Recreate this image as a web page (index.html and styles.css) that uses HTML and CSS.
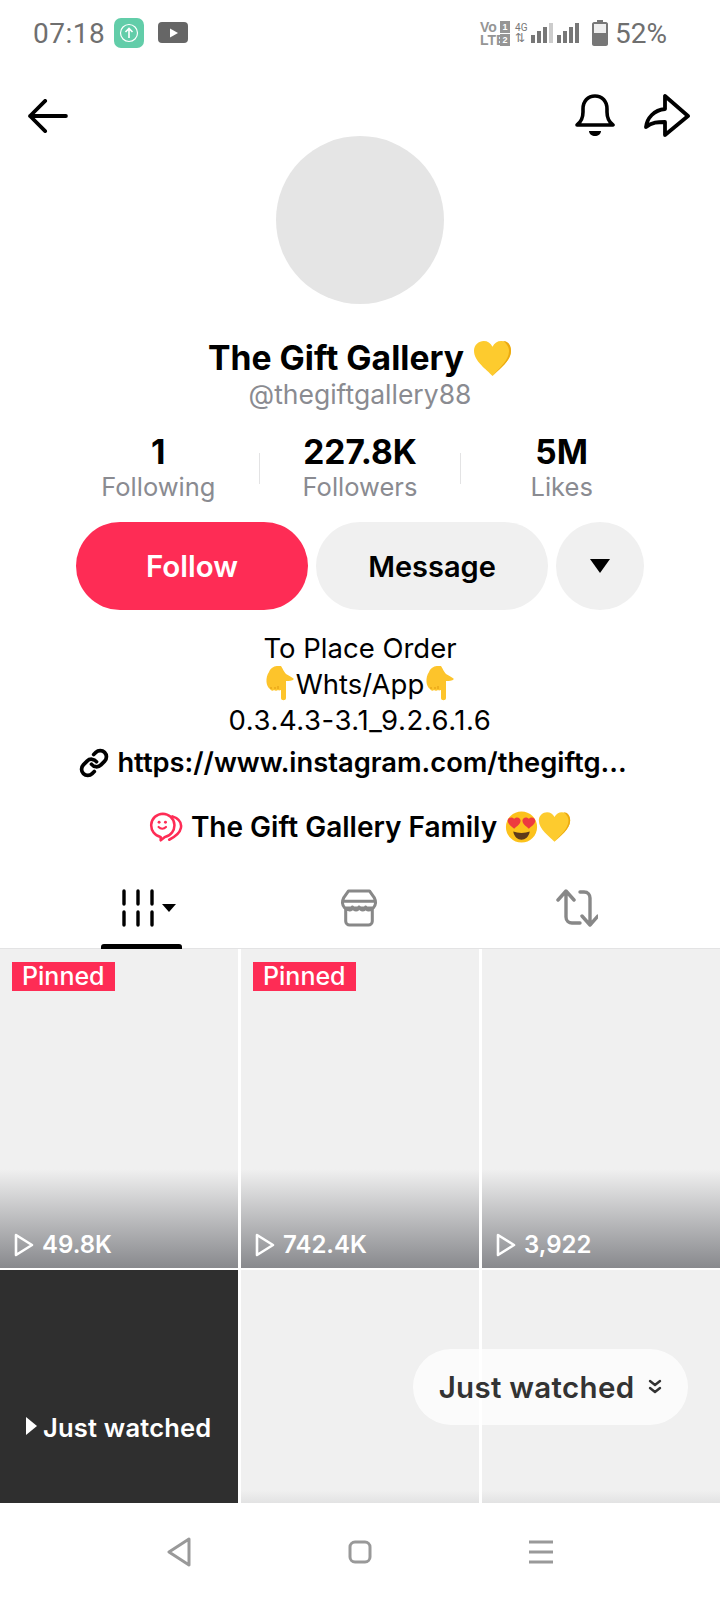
FILE: index.html
```html
<!DOCTYPE html>
<html lang="en">
<head>
  <meta charset="UTF-8">
  <title>The Gift Gallery</title>
  <link rel="stylesheet" href="styles.css">
</head>
<body>

  <svg class="defs" width="0" height="0">
    <symbol id="heart" viewBox="0 0 40 38">
      <path d="M20 37C14 30 1 22 1 11 1 5 6 1 11 1c4 0 7 2 9 6 2-4 5-6 9-6 5 0 10 4 10 10 0 11-13 19-19 26z" fill="#fdcb2e"/>
      <path d="M31 1c5 0 8 4 8 10 0 11-13 19-19 26 5-7 17-15 17-26 0-4-3-8-6-10z" fill="#eba90f"/>
    </symbol>
    <symbol id="hand" viewBox="0 0 30 36">
      <path d="M4 6C6 1 10 0 13 0h3c2 3 3 6 5 8 3 2 6 3 8 5-2 2-5 2-8 2v17c0 3-5 3-5 0v-8c-1 0-2 1-3 0-1 1-3 1-4 0-1 1-3 1-4-1C1 20 0 12 4 6z" fill="#fdc42b"/>
      <path d="M6 21v2M10 21v2M13 20v3" stroke="#e09a10" stroke-width="1" fill="none"/>
    </symbol>
    <symbol id="hearteyes" viewBox="0 0 36 36">
      <circle cx="18" cy="18" r="17" fill="#fcc21b"/>
      <path d="M9 23c5 2 13 2 18 0-1 6-5 9-9 9s-8-3-9-9z" fill="#5d3a1a"/>
      <path d="M10 20C7 17 3 15 3 11c0-3 4-5 7-2 3-3 7-1 7 2 0 4-4 6-7 9zM26 20c-3-3-7-5-7-9 0-3 4-5 7-2 3-3 7-1 7 2 0 4-4 6-7 9z" fill="#ed3b3f"/>
    </symbol>
  </svg>

  <div class="status-bar">
    <div class="status-left">
      <span class="clock">07:18</span>
      <span class="app-badge">
        <svg viewBox="0 0 30 30" width="30" height="30"><circle cx="15" cy="15" r="8.500" fill="none" stroke="#fff" stroke-width="1.200"/><path d="M15 20v-9M11.500 14l3.500-3.500 3.500 3.500" fill="none" stroke="#fff" stroke-width="1.600"/></svg>
      </span>
      <svg class="yt" viewBox="0 0 30 22"><rect width="30" height="21" rx="4" fill="#666"/><path d="M12 6.500l8 4.500-8 4.500z" fill="#fff"/></svg>
    </div>
    <div class="status-right">
      <div class="volte">
        <span>Vo</span><b>1</b>
        <span>LTE</span><b>2</b>
      </div>
      <div class="net">4G<i>⇅</i></div>
      <svg class="signal" viewBox="0 0 22 20"><path d="M0 12h4v8H0zM6 8h4v12H6zM12 4h4v16h-4z" fill="#777"/><path d="M18 0h4v20h-4z" fill="#ccc"/></svg>
      <svg class="signal signal-second" viewBox="0 0 22 20"><path d="M0 12h4v8H0zM6 8h4v12H6zM12 4h4v16h-4zM18 0h4v20h-4z" fill="#777"/></svg>
      <svg class="battery" viewBox="0 0 16 26"><path d="M5 0h6v2h3c1 0 2 1 2 2v20c0 1-1 2-2 2H2c-1 0-2-1-2-2V4c0-1 1-2 2-2h3z" fill="#777"/><rect x="2" y="4" width="12" height="9" fill="#eee"/></svg>
      <span class="percent">52%</span>
    </div>
  </div>

  <div class="toolbar">
    <svg class="back" viewBox="0 0 42 36"><path d="M2 18h38M18 2L2 18l16 16" fill="none" stroke="#000" stroke-width="4" stroke-linecap="round" stroke-linejoin="round"/></svg>
    <div class="toolbar-right">
      <svg class="bell" viewBox="0 0 40 44"><path d="M2 31c4-3 6-6 6-13v-3C8 7 13 2 20 2s12 5 12 13v3c0 7 2 10 6 13z" fill="none" stroke="#000" stroke-width="3.600" stroke-linejoin="round"/><path d="M14 37h12c0 3-3 5-6 5s-6-2-6-5z"/></svg>
      <svg class="share" viewBox="0 0 46 44"><path d="M44 22L21 2v13C10 16 3 24 2 33c6-5 12-5 19-5v13z" fill="none" stroke="#000" stroke-width="3.800" stroke-linejoin="round"/></svg>
    </div>
  </div>

  <div class="avatar"></div>

  <h1 class="name">The Gift Gallery <svg class="emoji-name"><use href="#heart"/></svg></h1>
  <div class="handle">@thegiftgallery88</div>

  <div class="stats">
    <div class="stat"><strong>1</strong><span>Following</span></div>
    <div class="divider"></div>
    <div class="stat"><strong>227.8K</strong><span>Followers</span></div>
    <div class="divider"></div>
    <div class="stat"><strong>5M</strong><span>Likes</span></div>
  </div>

  <div class="actions">
    <button class="btn btn-follow">Follow</button>
    <button class="btn btn-message">Message</button>
    <button class="btn btn-more"><span class="caret"></span></button>
  </div>

  <div class="bio">
    <div>To Place Order</div>
    <div class="bio-row"><svg class="emoji"><use href="#hand"/></svg>Whts/App<svg class="emoji"><use href="#hand"/></svg></div>
    <div class="bio-phone">0.3.4.3-3.1_9.2.6.1.6</div>
  </div>

  <div class="link">
    <svg class="link-icon" viewBox="0 0 24 24"><path d="M10 13a5 5 0 0 0 7.540.540l3-3a5 5 0 0 0-7.070-7.070l-1.720 1.710M14 11a5 5 0 0 0-7.540-.540l-3 3a5 5 0 0 0 7.070 7.070l1.710-1.710" fill="none" stroke="#000" stroke-width="3" stroke-linecap="round" stroke-linejoin="round"/></svg>
    https://www.instagram.com/thegiftg...
  </div>

  <div class="family">
    <svg class="family-icon" viewBox="0 0 32 28"><path d="M13 1.500a11 11 0 0 1 2 21.800L11 26.500v-3.200A11 11 0 0 1 13 1.500z" fill="none" stroke="#fe2c55" stroke-width="2.400" stroke-linejoin="round"/><path d="M22 4c6 2 9 6 8 11-1 5-5 8-11 11" fill="none" stroke="#fe2c55" stroke-width="2.400" stroke-linecap="round"/><circle cx="9.500" cy="9.500" r="1.400" fill="#fe2c55"/><circle cx="15.500" cy="9.500" r="1.400" fill="#fe2c55"/><path d="M9 14c2 2 5 2 7 0" fill="none" stroke="#fe2c55" stroke-width="2" stroke-linecap="round"/></svg>
    The Gift Gallery Family
    <span class="family-emoji"><svg class="emoji"><use href="#hearteyes"/></svg><svg class="emoji"><use href="#heart"/></svg></span>
  </div>

  <div class="tabs">
    <div class="tab tab-active">
      <svg class="tab-videos" viewBox="0 0 56 38"><path d="M3 2v13M3 23v13M17 2v13M17 23v13M31 2v13M31 23v13" stroke="#000" stroke-width="3.400" stroke-linecap="round"/><path d="M41 15h14l-7 8z"/></svg>
    </div>
    <div class="tab">
      <svg class="tab-icon" viewBox="0 0 40 40"><path d="M9 2h22l5 7c2 4 2 8-1 11H5c-3-3-3-7-1-11z" fill="none" stroke="#888" stroke-width="3.200" stroke-linejoin="round"/><path d="M2 13h36M6 20c3 3 6 3 7-1 2 4 6 4 7 0 2 4 6 4 7 0 1 4 5 4 7 1M6 21v13c0 2 2 4 4 4h20c2 0 4-2 4-4V21" fill="none" stroke="#888" stroke-width="3.200" stroke-linejoin="round"/></svg>
    </div>
    <div class="tab">
      <svg class="tab-icon" viewBox="0 0 42 38"><path d="M2 11l8-9 8 9M10 3v25c0 4 3 6 6 6h8M24 3h4c4 0 6 3 6 6v25M26 27l8 9 8-9" fill="none" stroke="#888" stroke-width="3.400" stroke-linecap="round" stroke-linejoin="round"/></svg>
    </div>
  </div>

  <div class="feed">
    <div class="grid">
      <div class="cell">
        <span class="pinned">Pinned</span>
        <div class="plays"><svg class="play" viewBox="0 0 20 24"><path d="M2 2l16 10L2 22z" fill="none" stroke="#fff" stroke-width="2.600" stroke-linejoin="round"/></svg>49.8K</div>
      </div>
      <div class="cell">
        <span class="pinned">Pinned</span>
        <div class="plays"><svg class="play" viewBox="0 0 20 24"><path d="M2 2l16 10L2 22z" fill="none" stroke="#fff" stroke-width="2.600" stroke-linejoin="round"/></svg>742.4K</div>
      </div>
      <div class="cell">
        <span></span>
        <div class="plays"><svg class="play" viewBox="0 0 20 24"><path d="M2 2l16 10L2 22z" fill="none" stroke="#fff" stroke-width="2.600" stroke-linejoin="round"/></svg>3,922</div>
      </div>
      <div class="cell cell-dark">
        <div class="watched"><span class="watched-arrow"></span>Just watched</div>
      </div>
      <div class="cell"></div>
      <div class="cell"></div>
    </div>
    <div class="watched-pill">
      Just watched
      <svg class="chevrons" viewBox="0 0 14 16"><path d="M2 2l5 4 5-4M2 9l5 4 5-4" fill="none" stroke="#333" stroke-width="2.400" stroke-linecap="round" stroke-linejoin="round"/></svg>
    </div>
  </div>

  <div class="navbar">
    <svg class="nav-back" viewBox="0 0 26 30"><path d="M23 2L3 15l20 13z" fill="none" stroke="#999" stroke-width="3" stroke-linejoin="round"/></svg>
    <svg class="nav-home" viewBox="0 0 24 24"><rect x="2" y="2" width="20" height="20" rx="5" fill="none" stroke="#999" stroke-width="3"/></svg>
    <svg class="nav-menu" viewBox="0 0 26 24"><path d="M1 2h24M1 12h24M1 22h24" stroke="#999" stroke-width="3"/></svg>
  </div>

</body>
</html>
```

FILE: styles.css
```css
* {
  box-sizing: border-box;
}
body {
  margin: 0;
  width: 720px;
  height: 1600px;
  overflow: hidden;
  background: #fff;
  color: #000;
  font-family: Inter, "Liberation Sans", sans-serif;
  display: flex;
  flex-direction: column;
}
.defs {
  position: absolute;
}

/* status bar */
.status-bar {
  height: 66px;
  padding: 0 53px 0 33px;
  display: flex;
  align-items: center;
  justify-content: space-between;
  color: #6f6f6f;
  font-family: Roboto, sans-serif;
}
.status-left, .status-right {
  display: flex;
  align-items: center;
}
.clock {
  font-size: 28px;
  letter-spacing: 0.5px;
  margin-right: 9px;
}
.app-badge {
  width: 30px;
  height: 30px;
  border-radius: 7px;
  background: #62cda9;
  display: block;
}
.app-badge svg {
  display: block;
}
.yt {
  width: 30px;
  height: 22px;
  margin-left: 14px;
}
.volte {
  display: grid;
  grid-template-columns: 20px 10px;
  row-gap: 1px;
  width: 30px;
  height: 25px;
  font-size: 14px;
  font-weight: 700;
  line-height: 12px;
  color: #959595;
  font-family: "Liberation Sans Narrow", "Liberation Sans", sans-serif;
}
.volte b {
  background: #959595;
  color: #fff;
  font-size: 9px;
  text-align: center;
  height: 12px;
  line-height: 12px;
}
.net {
  width: 14px;
  margin-left: 5px;
  font-size: 10px;
  line-height: 11px;
  color: #777;
}
.net i {
  display: block;
  font-style: normal;
  font-size: 12px;
  line-height: 11px;
}
.signal {
  width: 22px;
  height: 20px;
  margin-left: 2px;
}
.signal-second {
  margin-left: 4px;
}
.battery {
  width: 16px;
  height: 26px;
  margin-left: 13px;
}
.percent {
  font-size: 28px;
  margin-left: 7px;
}

/* toolbar */
.toolbar {
  height: 70px;
  padding: 30px 30px 0 28px;
  display: flex;
  justify-content: space-between;
  align-items: center;
}
.toolbar-right {
  display: flex;
  align-items: center;
  gap: 29px;
}
.back {
  width: 40px;
  height: 34px;
}
.bell {
  width: 40px;
  height: 44px;
}
.share {
  width: 46px;
  height: 44px;
}

/* profile head */
.avatar {
  width: 168px;
  height: 168px;
  border-radius: 50%;
  background: #e5e5e5;
  margin: 0 auto;
}
.name {
  margin: 34px 0 0;
  font-size: 33.700px;
  font-weight: 700;
  line-height: 40px;
  display: flex;
  justify-content: center;
  align-items: center;
  gap: 9px;
}
.emoji-name {
  width: 39px;
  height: 37px;
}
.handle {
  margin-top: 1px;
  font-size: 26.500px;
  line-height: 30px;
  text-align: center;
  color: #8a8b91;
}
.stats {
  margin: 26px auto 0;
  width: 604px;
  display: flex;
  align-items: center;
}
.stat {
  flex: 1;
  text-align: center;
}
.stat strong {
  display: block;
  font-size: 33.500px;
  line-height: 34px;
  font-weight: 700;
}
.stat span {
  display: block;
  margin-top: 3px;
  font-size: 25.500px;
  line-height: 30px;
  color: #8a8b91;
}
.divider {
  width: 1px;
  height: 31px;
  background: #e3e3e4;
}
.actions {
  margin-top: 20px;
  padding: 0 76px;
  display: flex;
  gap: 8px;
}
.btn {
  height: 88px;
  width: 232px;
  border: none;
  border-radius: 44px;
  font-family: inherit;
  font-size: 29px;
  font-weight: 600;
  background: #f0f0f0;
  color: #000;
  display: flex;
  align-items: center;
  justify-content: center;
}
.btn-follow {
  background: #fe2c55;
  color: #fff;
  font-size: 29.500px;
}
.btn-more {
  width: 88px;
}
.caret {
  width: 0;
  height: 0;
  border-left: 10px solid transparent;
  border-right: 10px solid transparent;
  border-top: 14px solid #000;
}

/* bio */
.bio {
  margin-top: 20px;
  font-size: 27.500px;
  line-height: 36px;
  text-align: center;
}
.bio-row {
  display: flex;
  justify-content: center;
  align-items: center;
}
.bio-phone {
  letter-spacing: 0.55px;
}
.emoji {
  width: 32px;
  height: 36px;
  vertical-align: middle;
}
.link {
  margin-top: 7px;
  padding-right: 14px;
  font-size: 27.300px;
  font-weight: 600;
  line-height: 36px;
  display: flex;
  justify-content: center;
  align-items: center;
  gap: 8px;
}
.link-icon {
  width: 30px;
  height: 30px;
}
.family {
  margin-top: 28px;
  font-size: 28px;
  font-weight: 600;
  line-height: 36px;
  display: flex;
  justify-content: center;
  align-items: center;
  gap: 8px;
}
.family-icon {
  width: 34px;
  height: 30px;
}
.family-emoji {
  display: flex;
  align-items: center;
}
.family-emoji .emoji {
  width: 33px;
}

/* tabs */
.tabs {
  margin-top: 26px;
  height: 78px;
  padding: 0 34px 0 32px;
  display: flex;
  border-bottom: 1px solid #e3e3e4;
}
.tab {
  flex: 1;
  position: relative;
  display: flex;
  align-items: flex-start;
  justify-content: center;
  padding-top: 18px;
}
.tab-active::after {
  content: "";
  position: absolute;
  left: 69px;
  right: 68px;
  bottom: -1px;
  height: 5px;
  background: #000;
  border-radius: 3px 3px 0 0;
}
.tab-videos {
  width: 56px;
  height: 38px;
  margin-left: 16px;
}
.tab-icon {
  width: 42px;
  height: 38px;
}

/* video grid */
.feed {
  position: relative;
  flex: 1;
  overflow: hidden;
}
.grid {
  display: grid;
  grid-template-columns: 238px 238px 238px;
  grid-auto-rows: 319px;
  gap: 2px 3px;
}
.cell {
  background: linear-gradient(to bottom, #f0f0f0 69%, #88898d 100%);
  padding: 13px 12px 8px 12px;
  display: flex;
  flex-direction: column;
  justify-content: space-between;
  align-items: flex-start;
  color: #fff;
}
.cell-dark {
  background: #2f2f2f;
  justify-content: center;
  padding: 0 0 4px 26px;
}
.pinned {
  background: #fe2c55;
  color: #fff;
  font-size: 25px;
  font-weight: 500;
  line-height: 29px;
  padding: 0 10px;
}
.plays {
  display: flex;
  align-items: center;
  gap: 8px;
  padding-left: 2px;
  font-size: 24px;
  font-weight: 600;
  line-height: 30px;
}
.play {
  width: 20px;
  height: 24px;
}
.watched {
  display: flex;
  align-items: center;
  font-size: 25.500px;
  font-weight: 600;
  letter-spacing: 0.2px;
}
.watched-arrow {
  width: 0;
  height: 0;
  border-left: 11px solid #fff;
  border-top: 9px solid transparent;
  border-bottom: 9px solid transparent;
  margin-right: 6px;
  margin-bottom: 4px;
}
.watched-pill {
  position: absolute;
  left: 413px;
  top: 400px;
  width: 275px;
  height: 76px;
  border-radius: 38px;
  background: rgba(255, 255, 255, 0.75);
  color: #333;
  font-size: 29.500px;
  font-weight: 600;
  letter-spacing: 0.3px;
  display: flex;
  align-items: center;
  justify-content: center;
  gap: 14px;
}
.chevrons {
  width: 14px;
  height: 16px;
}

/* android nav */
.navbar {
  height: 97px;
  background: #fff;
  padding: 0 166px;
  display: flex;
  align-items: center;
  justify-content: space-between;
}
.nav-back {
  width: 26px;
  height: 30px;
}
.nav-home {
  width: 24px;
  height: 24px;
}
.nav-menu {
  width: 26px;
  height: 24px;
}
```
